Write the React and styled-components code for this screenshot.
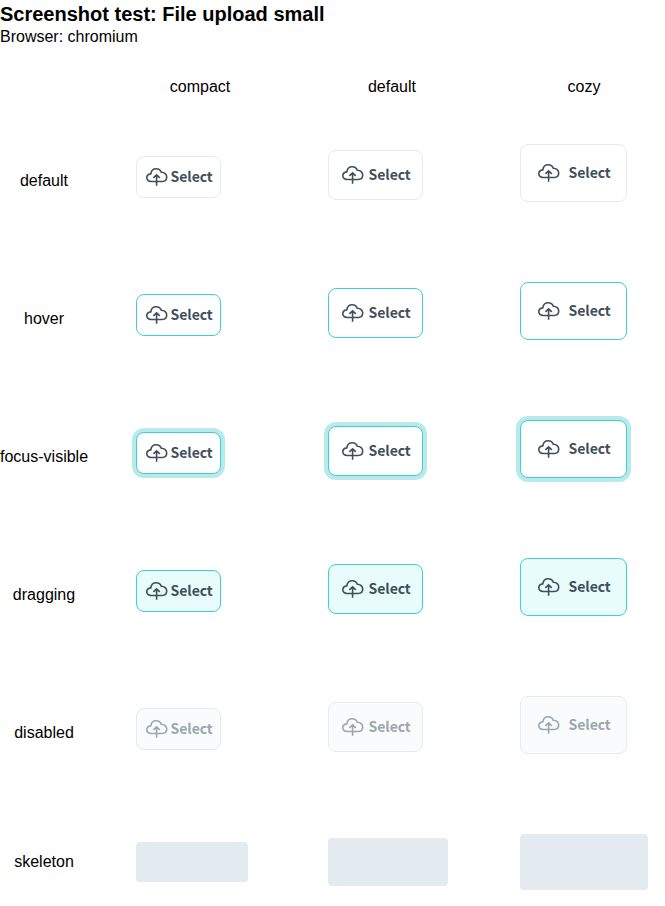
import React from "react";
import styled, { createGlobalStyle, css } from "styled-components";

const Global = createGlobalStyle`
  body { margin: 0; background: #fff; color: #000; font: 16px/18px "Liberation Sans", Arial, sans-serif; }
  * { box-sizing: border-box; }
`;
const Title = styled.h1`
  margin: 0;
  padding-top: 3px;
  font-size: 20px;
  line-height: 23px;
  font-weight: 700;
`;
const Browser = styled.div`
  height: 22px;
  line-height: 22px;
`;
const Row = styled.div`
  display: grid;
  grid-template-columns: 136px 192px 192px 128px;
  height: ${(p) => p.$height || 138}px;
  align-items: center;
`;
const Header = styled.div`
  width: 128px;
  padding-top: 13px;
  text-align: center;
`;
const Label = styled.div`
  width: 88px;
  text-align: center;
  white-space: nowrap;
`;
const sizes = {
  compact: { w: 85, h: 42, pad: 9, gap: 2.5, lift: 8, sk: [112, 40] },
  default: { w: 95, h: 50, pad: 13, gap: 4.5, lift: 12, sk: [120, 48] },
  cozy: { w: 107, h: 58, pad: 17, gap: 8.5, lift: 16, sk: [128, 56] },
};
const tones = {
  default: css`border-color: #e3eaf0;`,
  hover: css`border-color: #3dcfd3;`,
  "focus-visible": css`border-color: #3dcfd3; box-shadow: 0 0 0 4px #b9eaeb;`,
  dragging: css`border-color: #3dcfd3; background: #e8fcfb;`,
  disabled: css`background: #fafbfd; color: #9ba7b0;`,
};
const Cell = styled.div`
  padding-bottom: ${(p) => sizes[p.$size].lift}px;
`;
const Upload = styled.button`
  display: flex;
  align-items: center;
  width: ${(p) => sizes[p.$size].w}px;
  height: ${(p) => sizes[p.$size].h}px;
  padding: 0 0 0 ${(p) => sizes[p.$size].pad}px;
  gap: ${(p) => sizes[p.$size].gap}px;
  border: 1px solid #e3eaf0;
  border-radius: 8px;
  background: #fff;
  color: #3f4f5b;
  font: 600 14px/24px "Noto Sans CJK SC", "Noto Sans", sans-serif;
  ${(p) => tones[p.$state]}
`;
const Caption = styled.span`
  padding-bottom: 2px;
  letter-spacing: -0.05px;
`;
const Skeleton = styled.div`
  width: ${(p) => sizes[p.$size].sk[0]}px;
  height: ${(p) => sizes[p.$size].sk[1]}px;
  border-radius: 4px;
  background: #e3eaf0;
`;
const Cloud = () => (
  <svg width="22" height="20" viewBox="0 0 22 20" fill="none" stroke="currentColor" strokeWidth="1.6">
    <path d="M5 14.5C2.5 14.5 .8 13 .8 10.8C.8 8.8 2.4 7.2 4.8 6.9C5.2 3.9 7.4 1.8 10.2 1.8C12.6 1.8 14.5 3.1 15.3 5.3C18.5 5.2 20.7 7.3 20.7 10.1C20.7 12.7 18.9 14.5 16.3 14.5ZM10.6 18.8V8.2M7.4 10.8L10.6 7.8L13.8 10.8" />
  </svg>
);
const names = ["compact", "default", "cozy"];
export default function App() {
  return (
    <>
      <Global />
      <Title>Screenshot test: File upload small</Title>
      <Browser>Browser: chromium</Browser>
      <Row $height={64}>
        <span />
        {names.map((n) => <Header key={n}>{n}</Header>)}
      </Row>
      {Object.keys(tones).map((state) => (
        <Row key={state}>
          <Label>{state}</Label>
          {names.map((n) => (
            <Cell key={n} $size={n}>
              <Upload $size={n} $state={state} disabled={state === "disabled"}><Cloud /><Caption>Select</Caption></Upload>
            </Cell>
          ))}
        </Row>
      ))}
      <Row $height={120}>
        <Label>skeleton</Label>
        {names.map((n) => <Skeleton key={n} $size={n} />)}
      </Row>
    </>
  );
}
